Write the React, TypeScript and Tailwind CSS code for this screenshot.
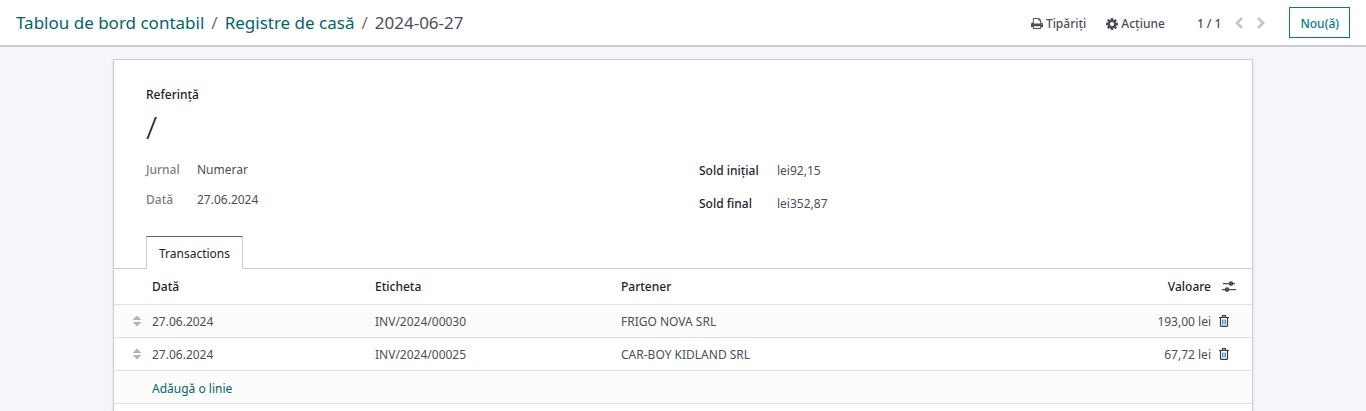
import { useState } from 'react';

type Transaction = {
  id: number;
  date: string;
  label: string;
  partner: string;
  amount: string;
};

const initialTransactions: Transaction[] = [
  { id: 1, date: '27.06.2024', label: 'INV/2024/00030', partner: 'FRIGO NOVA SRL', amount: '193,00 lei' },
  { id: 2, date: '27.06.2024', label: 'INV/2024/00025', partner: 'CAR-BOY KIDLAND SRL', amount: '67,72 lei' },
];

function PrintIcon() {
  return (
    <svg viewBox="0 128 1664 1536" className="h-[11px] w-3" fill="currentColor" aria-hidden="true">
      <path d="M384 1536h896v-256h-896v256zM384 896h896v-384h-160q-40 0-68-28t-28-68v-160h-640v640zM1536 960q0-26-19-45t-45-19-45 19-19 45 19 45 45 19 45-19 19-45zM1664 960v416q0 13-9.5 22.5t-22.5 9.5h-224v160q0 40-28 68t-68 28h-960q-40 0-68-28t-28-68v-160h-224q-13 0-22.5-9.5t-9.5-22.5v-416q0-79 56.5-135.5t135.5-56.5h64v-544q0-40 28-68t68-28h672q40 0 88 20t76 48l152 152q28 28 48 76t20 88v256h64q79 0 135.5 56.5t56.5 135.5z" />
    </svg>
  );
}

function CogIcon() {
  return (
    <svg viewBox="128 128 1536 1536" className="h-3 w-3" fill="currentColor" aria-hidden="true">
      <path d="M1152 896q0-106-75-181t-181-75-181 75-75 181 75 181 181 75 181-75 75-181zm512-109v222q0 12-8 23t-20 13l-185 28q-19 54-39 91 35 50 107 138 10 12 10 25t-9 23q-27 37-99 108t-94 71q-12 0-26-9l-138-108q-44 23-91 38-16 136-29 186-7 28-36 28h-222q-14 0-24.5-8.5t-11.5-21.5l-28-184q-49-16-90-37l-141 107q-10 9-25 9-14 0-25-11-126-114-165-168-7-10-7-23 0-12 8-23 15-21 51-66.5t54-70.5q-27-50-41-99l-183-27q-13-2-21-12.5t-8-23.5v-222q0-12 8-23t19-13l186-28q14-46 39-92-40-57-107-138-10-12-10-24 0-10 9-23 26-36 98.500-107.500t94.500-71.500q13 0 26 10l138 107q44-23 91-38 16-136 29-186 7-28 36-28h222q14 0 24.500 8.500t11.500 21.500l28 184q49 16 90 37l142-107q9-9 24-9 13 0 25 10 129 119 165 170 7 8 7 22 0 12-8 23-15 21-51 66.500t-54 70.500q26 50 41 98l183 28q13 2 21 12.500t8 23.500z" />
    </svg>
  );
}

function ChevronIcon({ direction }: { direction: 'left' | 'right' }) {
  return (
    <svg viewBox="0 0 8 12" className="h-3 w-2" fill="none" stroke="currentColor" strokeWidth="2.800" aria-hidden="true">
      <path d={direction === 'left' ? 'M7 1 2 6l5 5' : 'M1 1l5 5-5 5'} />
    </svg>
  );
}

function SlidersIcon() {
  return (
    <svg viewBox="0 0 14 12" className="h-3 w-[14px]" fill="currentColor" aria-hidden="true">
      <path d="M1 2h12v1.200H1zM0 8h14v1.200H0z" />
      <circle cx="9" cy="2.600" r="2.400" />
      <circle cx="5" cy="8.600" r="2.400" />
    </svg>
  );
}

function SortHandleIcon() {
  return (
    <svg viewBox="0 0 8 12" className="h-3 w-2" fill="currentColor" aria-hidden="true">
      <path d="M4 .5 8 4.500V5H0V4.500zM4 11.500 0 7.500V7h8v.5z" />
    </svg>
  );
}

function TrashIcon() {
  return (
    <svg viewBox="0 0 10 12" className="h-3 w-[10px]" fill="none" stroke="currentColor" strokeWidth="1.200" aria-hidden="true">
      <path d="M0 2.500h10M3.500 2V.6h3V2M1.500 2.500v8q0 .9 1 .9h5q1 0 1-.9v-8" />
      <path d="M3.500 4.500v5M5 4.500v5M6.500 4.500v5" stroke="#3a86b0" strokeWidth="0.900" />
    </svg>
  );
}

export default function App() {
  const [transactions, setTransactions] = useState(initialTransactions);

  const removeTransaction = (id: number) => {
    setTransactions(transactions.filter((t) => t.id !== id));
  };

  return (
    <div className="flex min-h-screen flex-col bg-[#f5f6fa] font-['Noto_Sans',sans-serif] text-[12px] leading-5 text-[#495057]">
      <header className="flex h-[47px] items-center justify-between border-b-2 border-[#c9ccd2] bg-white px-4">
        <nav className="flex gap-[7px] text-[17px] leading-6">
          <a href="#" className="text-[#01666b]">Tablou de bord contabil</a>
          <span className="text-[#6c757d]">/</span>
          <a href="#" className="text-[#01666b]">Registre de casă</a>
          <span className="text-[#6c757d]">/</span>
          <span>2024-06-27</span>
        </nav>
        <div className="flex items-center font-medium">
          <button type="button" className="flex items-center gap-[3px] pt-0.5">
            <PrintIcon />
            Tipăriți
          </button>
          <button type="button" className="ml-5 flex items-center gap-[3px] pt-0.5">
            <CogIcon />
            Acțiune
          </button>
          <span className="ml-8 pt-0.5">1 / 1</span>
          <button type="button" aria-label="Previous" className="ml-[14px] text-[#c3c6cd]">
            <ChevronIcon direction="left" />
          </button>
          <button type="button" aria-label="Next" className="ml-[14px] text-[#c3c6cd]">
            <ChevronIcon direction="right" />
          </button>
          <button type="button" className="ml-6 h-[31px] border border-[#017e84] px-[10px] pt-0.5 text-[#017e84]">
            Nou(ă)
          </button>
        </div>
      </header>

      <main className="flex flex-1 flex-col pt-3">
        <div className="mx-auto w-full max-w-[1140px] flex-1 border border-b-0 border-[#c9ccd2] bg-white shadow-sm">
          <div className="px-8 pt-[25px]">
            <div className="font-medium text-[#212529]">Referință</div>
            <h1 className="mt-0.5 text-[32px] leading-10 font-light text-[#212529]">/</h1>
            <div className="mt-[13px] grid grid-cols-2 gap-8">
              <dl className="grid grid-cols-[51px_1fr] content-start gap-y-[10px]">
                <dt className="font-medium text-[#7c8085]">Jurnal</dt>
                <dd>Numerar</dd>
                <dt className="font-medium text-[#7c8085]">Dată</dt>
                <dd>27.06.2024</dd>
              </dl>
              <dl className="grid grid-cols-[78px_1fr] content-start gap-y-[13px] pt-px">
                <dt className="font-medium text-[#212529]">Sold inițial</dt>
                <dd>lei92,15</dd>
                <dt className="font-medium text-[#212529]">Sold final</dt>
                <dd>lei352,87</dd>
              </dl>
            </div>
          </div>

          <div className="mt-[22px] flex border-b border-[#c9ccd2] px-8">
            <button
              type="button"
              className="-mb-px h-[33px] border border-t-[#71566d] border-r-[#c9ccd2] border-b-white border-l-[#c9ccd2] bg-white px-3 pt-0.5 text-[#212529]"
            >
              Transactions
            </button>
          </div>

          <table className="w-full table-fixed border-collapse text-left">
            <colgroup>
              <col className="w-[34px]" />
              <col className="w-[223px]" />
              <col className="w-[246px]" />
              <col />
              <col className="w-24" />
              <col className="w-[37px]" />
            </colgroup>
            <thead>
              <tr className="h-[35px] border-b border-[#dee2e6] text-[#212529]">
                <th />
                <th className="px-1 pt-0.5 font-medium">Dată</th>
                <th className="px-1 pt-0.5 font-medium">Eticheta</th>
                <th className="px-1 pt-0.5 font-medium">Partener</th>
                <th className="px-1 pt-0.5 text-right font-medium">Valoare</th>
                <th className="pt-0.5 pl-[7px]">
                  <button type="button" aria-label="Columns" className="block text-[#495057]">
                    <SlidersIcon />
                  </button>
                </th>
              </tr>
            </thead>
            <tbody>
              {transactions.map((t) => (
                <tr key={t.id} className="h-[33px] border-b border-[#dee2e6] odd:bg-[#fcfcfc]">
                  <td className="pl-[19px] text-[#adb5bd]">
                    <SortHandleIcon />
                  </td>
                  <td className="px-1 pt-0.5">{t.date}</td>
                  <td className="px-1 pt-0.5">{t.label}</td>
                  <td className="px-1 pt-0.5">{t.partner}</td>
                  <td className="px-1 pt-0.5 text-right">{t.amount}</td>
                  <td className="pl-1">
                    <button
                      type="button"
                      aria-label="Delete"
                      onClick={() => removeTransaction(t.id)}
                      className="block text-[#343a40]"
                    >
                      <TrashIcon />
                    </button>
                  </td>
                </tr>
              ))}
              <tr className="h-[33px] border-b border-[#dee2e6] bg-[#fcfcfc]">
                <td />
                <td colSpan={5} className="px-1 pt-1">
                  <a href="#" className="text-[#01666b]">Adăugă o linie</a>
                </td>
              </tr>
            </tbody>
          </table>
        </div>
      </main>
    </div>
  );
}
